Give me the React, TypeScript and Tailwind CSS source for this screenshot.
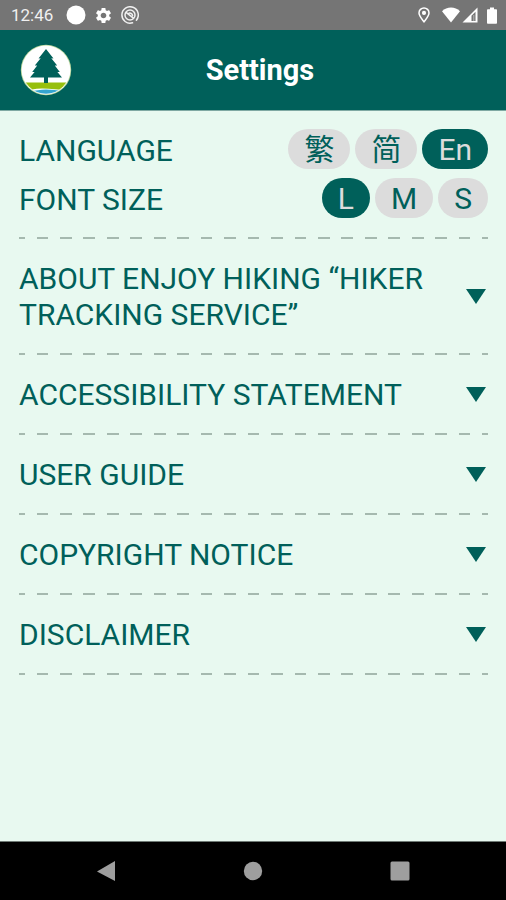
import { useState } from "react";

const languages = [
  { id: "tc", label: "繁" },
  { id: "sc", label: "简" },
  { id: "en", label: "En" },
];

const fontSizes = [
  { id: "L", label: "L" },
  { id: "M", label: "M" },
  { id: "S", label: "S" },
];

const sections = [
  "ABOUT ENJOY HIKING “HIKER TRACKING SERVICE”",
  "ACCESSIBILITY STATEMENT",
  "USER GUIDE",
  "COPYRIGHT NOTICE",
  "DISCLAIMER",
];

const StatusBar = () => (
  <div className="flex h-[30px] items-center bg-[#757575] pl-[11px] pr-2 text-white">
    <span className="text-[17px] leading-5 text-[#f0f0f0]">12:46</span>
    <div className="ml-[13px] flex items-center gap-2">
      <svg className="size-5" viewBox="0 0 20 20" fill="currentColor">
        <circle cx="10" cy="10" r="9.5" />
      </svg>
      <svg className="size-[19px]" viewBox="0 0 24 24" fill="currentColor">
        <path d="M19.14 12.94c.04-.3.06-.61.06-.94 0-.32-.02-.64-.07-.94l2.03-1.58c.18-.14.23-.41.12-.61l-1.92-3.32c-.12-.22-.37-.29-.59-.22l-2.39.96c-.5-.38-1.03-.7-1.62-.94l-.36-2.54c-.04-.24-.24-.41-.48-.41h-3.84c-.24 0-.43.17-.47.41l-.36 2.54c-.59.24-1.13.57-1.62.94l-2.39-.96c-.22-.08-.47 0-.59.22L2.74 8.87c-.12.21-.08.47.12.61l2.03 1.58c-.05.3-.09.63-.09.94s.02.64.07.94l-2.03 1.58c-.18.14-.23.41-.12.61l1.92 3.32c.12.22.37.29.59.22l2.39-.96c.5.38 1.03.7 1.62.94l.36 2.54c.05.24.24.41.48.41h3.84c.24 0 .44-.17.47-.41l.36-2.54c.59-.24 1.13-.56 1.62-.94l2.39.96c.22.08.47 0 .59-.22l1.92-3.32c.12-.22.07-.47-.12-.61l-2.01-1.58zM12 15.600c-1.980 0-3.600-1.620-3.600-3.600s1.620-3.600 3.600-3.600 3.600 1.620 3.600 3.600-1.620 3.600-3.600 3.600z" />
      </svg>
      <svg
        className="size-[18px]"
        viewBox="0 0 18 18"
        fill="none"
        stroke="#f0f0f0"
        strokeWidth="1.5"
        strokeLinecap="round"
      >
        <path d="M11.5 16.8A8.200 8.200 0 1 1 15.400 14.200" />
        <circle cx="9" cy="9" r="5" />
        <path d="M5.400 6.600l7 5.600M8 7.200c1.800-.4 3.400.7 3.600 2.400" />
      </svg>
    </div>
    <div className="ml-auto flex items-center">
      <svg
        className="mr-3 h-4 w-3"
        viewBox="0 0 12 16"
        fill="none"
        stroke="currentColor"
        strokeWidth="1.5"
      >
        <path d="M6 14.8C3.6 11.6 1 8.7 1 5.9a5 5 0 0 1 10 0c0 2.8-2.6 5.7-5 8.9z" />
        <circle cx="6" cy="5.9" r="1.3" fill="currentColor" />
      </svg>
      <svg className="mr-0.5 h-4 w-[18px]" viewBox="0 0 18 16" fill="currentColor">
        <path d="M9 15.5L0 4.2C2.5 1.8 5.600.5 9 .5s6.500 1.300 9 3.700z" />
      </svg>
      <svg className="mr-2 size-4" viewBox="0 0 16 16">
        <path d="M.5 15.5L15.500.5v15z" fill="white" />
        <path d="M9.5 8.800l4-4v9.200h-4z" fill="#757575" />
        <path d="M11.300 8h1v6h-1z" fill="#b5b5b5" />
      </svg>
      <svg className="h-[17px] w-3" viewBox="0 0 12 17" fill="currentColor">
        <path d="M4 .5h4v1.700h2.200c.5 0 .8.300.8.800v13c0 .5-.3.800-.8.800H1.800c-.5 0-.8-.3-.8-.8V3c0-.5.300-.8.800-.8H4z" />
      </svg>
    </div>
  </div>
);

const Logo = () => (
  <svg className="size-[52px] shrink-0" viewBox="0 0 52 52">
    <defs>
      <clipPath id="badge">
        <circle cx="26" cy="26" r="23.8" />
      </clipPath>
    </defs>
    <circle cx="26" cy="26" r="25.2" fill="#b9d69c" />
    <circle cx="26" cy="26" r="24.4" fill="white" />
    <g clipPath="url(#badge)">
      <path d="M0 38.500h52V46H0z" fill="#97bf0d" />
      <path d="M0 47c8-.5 14-2.500 22-2.500 10 0 18 2 30 1.500v6H0z" fill="white" />
      <path d="M8 47c7 .5 11-1.500 18-1.500s12 1.500 20 1V52H8z" fill="#35a5d0" />
    </g>
    <path
      d="M26 5l7.500 9.500-2.200-.2 5.900 7.200-2.400-.1 5 6.600-2.400-.1 4.600 5.600H28v5.500h-4v-5.500H10l4.600-5.600-2.400.1 5-6.600-2.400.1 5.900-7.200-2.200.2z"
      fill="#00605a"
    />
  </svg>
);

const Divider = () => (
  <hr className="h-0.5 border-0 bg-[repeating-linear-gradient(to_right,#a5b9af_0_1.25%,transparent_1.25%_3.75%,#a5b9af_3.75%_5%)]" />
);

type PillRowProps = {
  title: string;
  options: { id: string; label: string }[];
  value: string;
  onChange: (id: string) => void;
};

const PillRow = ({ title, options, value, onChange }: PillRowProps) => (
  <div className="flex items-center justify-between" role="group" aria-label={title}>
    <span className="pt-1">{title}</span>
    <div className="flex gap-[5px]">
      {options.map((option) => (
        <button
          key={option.id}
          aria-pressed={value === option.id}
          onClick={() => onChange(option.id)}
          className={
            value === option.id
              ? "h-10 rounded-full bg-[#00605a] px-4 pt-0.5 text-[#dcdcdc]"
              : "h-10 rounded-full bg-[#dcdcdc] px-4 pt-0.5 text-[#00605a]"
          }
        >
          {option.label}
        </button>
      ))}
    </div>
  </div>
);

const NavBar = () => (
  <nav className="flex h-[59px] items-center justify-around border-t border-[#6f7a75] bg-black px-8 text-[#9e9e9e]">
    <button aria-label="Back">
      <svg className="size-5" viewBox="0 0 20 20" fill="currentColor">
        <path d="M19 0v20L1 10.5z" />
      </svg>
    </button>
    <button aria-label="Home">
      <svg className="size-5" viewBox="0 0 20 20" fill="currentColor">
        <circle cx="10" cy="10" r="9.2" />
      </svg>
    </button>
    <button aria-label="Recent apps">
      <svg className="size-5" viewBox="0 0 20 20" fill="currentColor">
        <rect x=".5" y=".5" width="19" height="19" rx="1.5" />
      </svg>
    </button>
  </nav>
);

const App = () => {
  const [language, setLanguage] = useState("en");
  const [fontSize, setFontSize] = useState("L");

  return (
    <div className="flex min-h-screen flex-col bg-[#e8f9f0] font-[Roboto,'Noto_Sans_CJK_SC',sans-serif]">
      <StatusBar />
      <header className="flex h-[81px] items-center border-b border-[#7fa9a3] bg-[#00605a] px-5">
        <Logo />
        <h1 className="flex-1 text-center text-[29px] leading-9 font-bold text-white">
          Settings
        </h1>
        <div className="w-[38px]" />
      </header>

      <main className="flex-1 pr-[18px] pl-[19px] text-[30px] leading-9 text-[#00605a]">
        <div className="flex flex-col gap-[9px] pt-[18px] pb-[19px]">
          <PillRow
            title="LANGUAGE"
            options={languages}
            value={language}
            onChange={setLanguage}
          />
          <PillRow
            title="FONT SIZE"
            options={fontSizes}
            value={fontSize}
            onChange={setFontSize}
          />
        </div>
        <Divider />
        {sections.map((title) => (
          <div key={title}>
            <button className="flex w-full items-center justify-between py-5 pr-0.5 text-left">
              <span className="max-w-[430px] pt-0.5">{title}</span>
              <svg className="h-[15px] w-5 shrink-0" viewBox="0 0 20 15" fill="currentColor">
                <path d="M0 0h20L10 15z" />
              </svg>
            </button>
            <Divider />
          </div>
        ))}
      </main>

      <NavBar />
    </div>
  );
};

export default App;
